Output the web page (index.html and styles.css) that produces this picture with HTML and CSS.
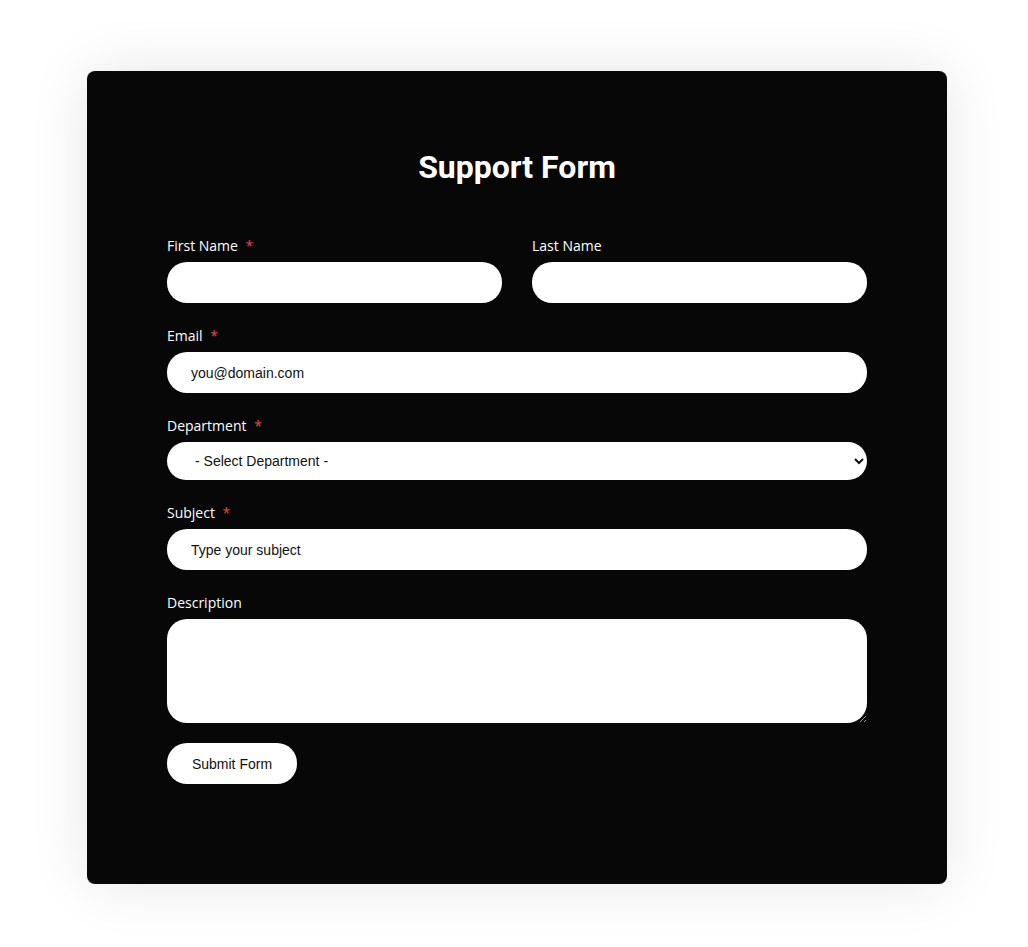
FILE: index.html
```html
<!DOCTYPE html>
<html lang="en">
<head>
    <meta charset="UTF-8">
    <meta name="viewport" content="width=device-width, initial-scale=1.0">
    <title>Support Form</title>
    <link rel="stylesheet" href="styles.css">
</head>
<body>
    <div class="card">
        <h1>Support Form</h1>
        <form class="support-form">
            <div class="row">
                <div class="field">
                    <label for="first-name">First Name <span class="req">*</span></label>
                    <input type="text" id="first-name">
                </div>
                <div class="field">
                    <label for="last-name">Last Name</label>
                    <input type="text" id="last-name">
                </div>
            </div>
            <div class="field">
                <label for="email">Email <span class="req">*</span></label>
                <input type="email" id="email" placeholder="you@domain.com">
            </div>
            <div class="field">
                <label for="department">Department <span class="req">*</span></label>
                <select id="department">
                    <option>- Select Department -</option>
                    <option>Sales</option>
                    <option>Billing</option>
                    <option>Technical Support</option>
                </select>
            </div>
            <div class="field">
                <label for="subject">Subject <span class="req">*</span></label>
                <input type="text" id="subject" placeholder="Type your subject">
            </div>
            <div class="field last">
                <label for="description">Description</label>
                <textarea id="description"></textarea>
            </div>
            <button type="submit" class="submit-button">Submit Form</button>
        </form>
    </div>
</body>
</html>
```

FILE: styles.css
```css
body {
    margin: 0;
    padding: 1px 0 63px;
    background: #fff;
    font-family: "Open Sans", sans-serif;
}
.card {
    width: 700px;
    margin: 70px auto 0 87px;
    padding: 78px 80px 100px;
    background: #070707;
    border-radius: 8px;
    box-shadow: 0 0 60px rgba(0, 0, 0, 0.1);
}
h1 {
    margin: 0 0 51px;
    font-family: Roboto, sans-serif;
    font-weight: 700;
    font-size: 32px;
    line-height: 36px;
    color: #fff;
    text-align: center;
}
.row {
    display: flex;
    gap: 30px;
}
.row .field {
    flex: 1;
}
.field {
    display: flex;
    flex-direction: column;
    margin-bottom: 23px;
}
.field.last {
    margin-bottom: 20px;
}
label {
    font-size: 14px;
    line-height: 20px;
    color: #fff;
    margin-bottom: 6px;
}
.req {
    color: #e5484d;
    margin-left: 4px;
}
input, select, textarea, button {
    font-family: "Liberation Sans", Arial, sans-serif;
    font-size: 14px;
    color: #111;
}
input, textarea {
    box-sizing: border-box;
    height: 41px;
    padding: 0 24px;
    border: none;
    border-radius: 20px;
    background: #fff;
    outline: none;
}
input::placeholder {
    color: #111;
    opacity: 1;
}
select {
    box-sizing: border-box;
    height: 38px;
    padding: 0 10px 0 24px;
    border: none;
    border-radius: 20px;
    background: #fff;
}
textarea {
    height: 104px;
    padding: 12px 24px;
    resize: vertical;
}
.submit-button {
    width: 130px;
    height: 41px;
    padding: 0;
    border: none;
    border-radius: 20px;
    background: #fff;
    cursor: pointer;
}
```
